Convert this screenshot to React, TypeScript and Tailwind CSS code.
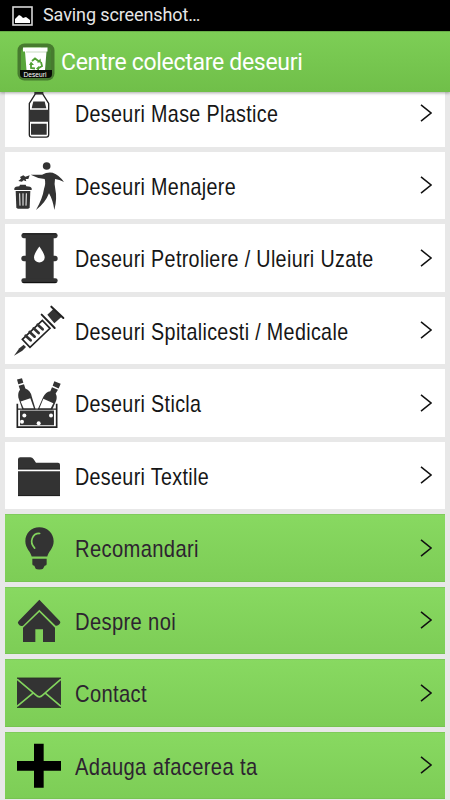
import React from "react";
import clsx from "clsx";

const DARK = "#333333";

function BottleIcon() {
  return (
    <svg className="shrink-0" width="60" height="67.5" viewBox="15 -17.4 180 202.5">
      <path d="M103 19h27v8h-27z" fill={DARK} />
      <path d="M106 27L88 56v94q0 7 7 7h44q7 0 7-7V56L128 27z" fill="#fff" stroke="#222" strokeWidth="4" />
      <path d="M100 50h34l5 20H95z" fill={DARK} />
      <path d="M87 75h60v36H87zM93 117h47v33H93z" fill={DARK} />
    </svg>
  );
}

function LitterIcon() {
  return (
    <svg className="shrink-0" width="60" height="67.5" viewBox="15 5 180 202.5" fill={DARK}>
      <circle cx="140" cy="47" r="11.5" />
      <path d="M92 73L126 73Q142 64 158 67Q178 74 192 95Q178 88 165 86Q162 101 166 117Q172 145 163 179Q159 150 147 129Q136 158 108 179Q128 144 132 116Q138 98 134 86Q112 84 92 73z" />
      <path d="M55 92L63 85L60 80L70 75L76 79L89 75L85 86L77 86L79 93L70 90L66 94z" />
      <path d="M43 114Q45 108 58 108L60 103H77L79 108Q93 108 95 114V119H43z" />
      <path d="M47 122H91L89 171Q88 175 84 175H54Q50 175 49 171z" />
      <path d="M59 129L60 166M69 129V166M79 129L78 166" stroke="#fff" strokeWidth="3" />
    </svg>
  );
}

function BarrelIcon() {
  return (
    <svg className="shrink-0" width="60" height="67.5" viewBox="15 6.6 180 202.5" fill={DARK}>
      <path d="M77 45H161V173H77z" />
      <rect x="64" y="34" width="109" height="15" rx="7" />
      <rect x="64" y="102" width="109" height="16" rx="8" />
      <rect x="64" y="169" width="109" height="15" rx="7" />
      <path d="M68 36H169M68 182H169" stroke="#111" strokeWidth="3" />
      <path d="M118 74Q134 96 134 107A16 15 0 0 1 102 107Q102 96 118 74z" fill="#fff" />
    </svg>
  );
}

function SyringeIcon() {
  return (
    <svg className="shrink-0" width="60" height="67.5" viewBox="15 5 180 202.5">
      <path d="M42 181L58 159L71 148L78 155L67 166z" fill={DARK} />
      <path d="M67 132L127 75L150 99L90 156z" fill="#fff" stroke="#222" strokeWidth="5" />
      <path d="M77 121L92 135M89 110L104 124M101 99L116 113M113 88L128 102" stroke="#333" strokeWidth="8" strokeLinecap="round" />
      <path d="M142 58L161 40L185 64L163 84Z" fill={DARK} />
      <path d="M125 58L164 98M154 34L190 68" stroke="#222" strokeWidth="6" strokeLinecap="round" />
    </svg>
  );
}

function GlassIcon() {
  return (
    <svg className="shrink-0" width="60" height="67.5" viewBox="15 6.6 180 202.5">
      <path d="M51 38L66 34L70 48L55 52zM56 57L72 52L76 65Q92 72 95 88L107 128H67L55 92Q53 77 60 69z" fill={DARK} />
      <path d="M163 43L182 51L176 65L158 57zM156 61L174 69L167 80Q173 92 167 105L157 128H113L130 90Q137 75 151 73z" fill={DARK} />
      <path d="M62 104L91 94L102 125H71zM130 96L160 109L152 125H118z" fill="#fff" />
      <path d="M52 111V181H170V111" fill="none" stroke="#222" strokeWidth="5" />
      <path d="M52 127H170" stroke="#222" strokeWidth="4" />
      <path d="M60 131H162V175H60z" fill={DARK} />
      <g fill="#fff">
        <circle cx="73" cy="146" r="6" />
        <circle cx="153" cy="146" r="6" />
        <circle cx="66" cy="165" r="6" />
        <circle cx="116" cy="169" r="6" />
      </g>
    </svg>
  );
}

function FolderIcon() {
  return (
    <svg className="shrink-0" width="60" height="67.5" viewBox="15 5 180 202.5" fill={DARK}>
      <path d="M54 87V57Q54 51 61 51H91Q97 51 101 57L108 67H174Q180 67 180 73V87z" />
      <path d="M54 93H180V167H54z" />
      <path d="M54 86.5H180M54 166H180" stroke="#111" strokeWidth="2" />
    </svg>
  );
}

function BulbIcon() {
  return (
    <svg className="shrink-0" width="60" height="67.5" viewBox="15 222.6 180 202.5" fill={DARK}>
      <path d="M118 262C94 262 76 280 76 304C76 326 93 336 95 350H142C144 336 161 326 161 304C161 280 142 262 118 262z" />
      <path d="M119 281C98 280 86 306 104 325" fill="none" stroke="#82d35d" strokeWidth="5" strokeLinecap="round" />
      <path d="M97 357H140V373Q140 377 134 378L129 387Q127 389 118 389T107 387L103 378Q97 377 97 373z" />
    </svg>
  );
}

function HouseIcon() {
  return (
    <svg className="shrink-0" width="60" height="67.5" viewBox="15 20 180 202.5" fill={DARK}>
      <path d="M118 58L180 123Q183 128 178 132Q174 137 167 136L118 88L69 136Q60 139 56 132Q51 127 56 122z" />
      <path d="M118 95L165 142V185H129V147H106V185H69V142z" />
    </svg>
  );
}

function MailIcon() {
  return (
    <svg className="shrink-0" width="60" height="67.5" viewBox="15 237.6 180 202.5" fill={DARK}>
      <path d="M51 294H183V384H51z" />
      <path d="M51 298L108 346Q118 356 128 346L183 298M51 380L99 340M183 380L136 340" fill="none" stroke="#82d35d" strokeWidth="5" />
      <path d="M51 295H183M51 383H183" stroke="#28331f" strokeWidth="2" />
    </svg>
  );
}

function PlusIcon() {
  return (
    <svg className="shrink-0" width="60" height="67.5" viewBox="15 455 180 202.5">
      <path d="M102 490H131V542H183V571H131V622H102V571H51V542H102z" fill="#000" />
    </svg>
  );
}

function AppLogo() {
  return (
    <svg className="shrink-0" width="38" height="38" viewBox="0 0 38 38">
      <rect x="0.5" y="0.5" width="37" height="37" rx="7" fill="#477b2f" />
      <path d="M4 10Q4 4 10 4H28Q34 4 34 10V27H4z" fill="#58a63a" />
      <path d="M24 4H29Q34 4 34 10V27H24z" fill="#468431" />
      <path d="M6 4.5H30.5V8.5H29.5L28 27H9.5L8 8.5H6z" fill="#fff" />
      <path d="M9 9H29" stroke="#c8dbc0" strokeWidth="1" />
      <path d="M15 18L18 15.5L22 18.5M24 19L25 23L21 25.5M18 25.5L14 25L14 21" fill="none" stroke="#51a033" strokeWidth="1.8" />
      <path d="M20 19.5L24 19.5L23.5 15.5zM22 23L19 25.5L22 28zM12 22L14 18.5L17 22z" fill="#51a033" />
      <path d="M3 27H35V31Q35 35 31 35H7Q3 35 3 31z" fill="#080c06" />
      <text x="6.5" y="34" fill="#fff" fontFamily="Liberation Sans" fontSize="8" textLength="23" lengthAdjust="spacingAndGlyphs">Deseuri</text>
    </svg>
  );
}

const menuItems = [
  { label: "Deseuri Mase Plastice", icon: BottleIcon, green: false },
  { label: "Deseuri Menajere", icon: LitterIcon, green: false },
  { label: "Deseuri Petroliere / Uleiuri Uzate", icon: BarrelIcon, green: false },
  { label: "Deseuri Spitalicesti / Medicale", icon: SyringeIcon, green: false },
  { label: "Deseuri Sticla", icon: GlassIcon, green: false },
  { label: "Deseuri Textile", icon: FolderIcon, green: false },
  { label: "Recomandari", icon: BulbIcon, green: true },
  { label: "Despre noi", icon: HouseIcon, green: true },
  { label: "Contact", icon: MailIcon, green: true },
  { label: "Adauga afacerea ta", icon: PlusIcon, green: true },
];

export default function App() {
  return (
    <div className="w-[450px] h-[800px] overflow-hidden flex flex-col bg-[#e8e8e8]">
      <div className="h-[31px] shrink-0 bg-black flex items-center pl-3 gap-[10px]">
        <svg width="21" height="20" viewBox="0 0 21 20">
          <rect x="1" y="1" width="19" height="18" fill="none" stroke="#d8d8d8" strokeWidth="1.6" />
          <path d="M3 17V13L7 9L9 10L11 12L14 11L18 14V17z" fill="#fff" />
        </svg>
        <span className="font-['Roboto'] text-[18px] tracking-[-0.1px] leading-none text-[#e6e6e6] whitespace-nowrap -mt-[1px]">Saving screenshot…</span>
      </div>
      <header className="relative z-10 h-[61px] shrink-0 flex items-center pl-[17px] gap-[6px] bg-linear-to-b from-[#7dce56] to-[#70bf49] border-t border-[#68ad48] shadow-[0_1px_3px_rgba(0,0,0,0.35)]">
        <AppLogo />
        <h1 className="font-['Roboto'] text-[23px] tracking-[-0.3px] leading-none text-white whitespace-nowrap pt-[1px]">Centre colectare deseuri</h1>
      </header>
      <main className="flex flex-col gap-[5px] px-[5px] -mt-[12.8px]">
        {menuItems.map((item) => {
          const Icon = item.icon;
          return (
            <button
              key={item.label}
              className={clsx(
                "h-[67.5px] shrink-0 flex items-center text-left",
                item.green
                  ? "bg-linear-to-b from-[#88d961] to-[#7dcd56] text-[#2d2430] shadow-[inset_0_1px_0_#7fcb5b,inset_0_-1px_0_#77c451]"
                  : "bg-white text-[#161616]"
              )}
            >
              <Icon />
              <span className="flex-1 min-w-0 pl-[9.5px] pt-[3px] font-['Liberation_Sans',sans-serif] text-[24px] tracking-[0.43px] leading-none whitespace-nowrap">
                <span className={clsx("inline-block origin-left", item.green ? "scale-x-[0.84]" : "scale-x-[0.82]")}>{item.label}</span>
              </span>
              <svg className="shrink-0 mr-[13px]" width="12" height="20" viewBox="0 0 12 20">
                <path d="M1 1.8L11 10L1 18.2" fill="none" stroke="#111" strokeWidth="1.5" />
              </svg>
            </button>
          );
        })}
      </main>
    </div>
  );
}
